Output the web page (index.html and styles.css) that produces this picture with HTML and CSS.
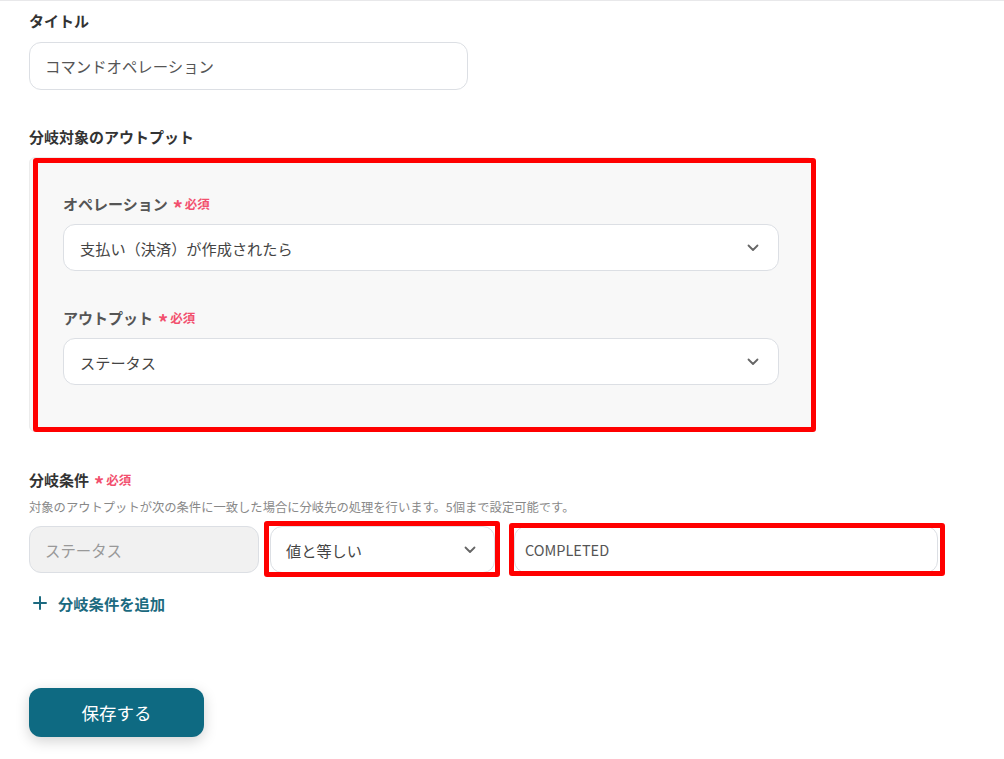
FILE: index.html
```html
<!DOCTYPE html>
<html lang="ja">
<head>
<meta charset="utf-8">
<link rel="stylesheet" href="styles.css">
</head>
<body>
<div class="page">
  <div class="label">タイトル</div>
  <div class="input title-input">コマンドオペレーション</div>

  <div class="label section-label">分岐対象のアウトプット</div>
  <div class="panel">
    <div class="label sub">オペレーション<span class="req"><span class="ast">*</span>必須</span></div>
    <div class="select">
      <span>支払い（決済）が作成されたら</span>
      <svg class="chev" width="12" height="8" viewBox="0 0 12 8"><path d="M1.5 1.5 L6 6 L10.5 1.5" fill="none" stroke="#666" stroke-width="1.8" stroke-linecap="round" stroke-linejoin="round"/></svg>
    </div>
    <div class="label sub second">アウトプット<span class="req"><span class="ast">*</span>必須</span></div>
    <div class="select">
      <span>ステータス</span>
      <svg class="chev" width="12" height="8" viewBox="0 0 12 8"><path d="M1.5 1.5 L6 6 L10.5 1.5" fill="none" stroke="#666" stroke-width="1.8" stroke-linecap="round" stroke-linejoin="round"/></svg>
    </div>
    <div class="annot annot-panel"></div>
  </div>

  <div class="label cond-label">分岐条件<span class="req"><span class="ast">*</span>必須</span></div>
  <div class="desc">対象のアウトプットが次の条件に一致した場合に分岐先の処理を行います。5個まで設定可能です。</div>
  <div class="cond-row">
    <div class="input disabled">ステータス</div>
    <div class="select small">
      <span>値と等しい</span>
      <svg class="chev" width="12" height="8" viewBox="0 0 12 8"><path d="M1.5 1.5 L6 6 L10.5 1.5" fill="none" stroke="#666" stroke-width="1.8" stroke-linecap="round" stroke-linejoin="round"/></svg>
      <div class="annot annot-select"></div>
    </div>
    <div class="input value">COMPLETED
      <div class="annot annot-value"></div>
    </div>
  </div>
  <div class="add">
    <svg width="14" height="14" viewBox="0 0 14 14"><path d="M7 1 V13 M1 7 H13" stroke="#1c6a80" stroke-width="2" stroke-linecap="round"/></svg>
    <span>分岐条件を追加</span>
  </div>

  <button class="save">保存する</button>
</div>
</body>
</html>
```

FILE: styles.css
```css
* { box-sizing: border-box; }
html, body { margin: 0; padding: 0; background: #fff; }
body {
  font-family: "Noto Sans CJK JP", "Noto Sans", sans-serif;
  color: #333;
  border-top: 1px solid #e8e8ea;
}
.page {
  padding: 10px 0 0 29px;
  width: 1004px;
  height: 758px;
}
.label {
  font-size: 15px;
  font-weight: 700;
  line-height: 20px;
  color: #333;
  display: flex;
  align-items: center;
}
.input {
  height: 48px;
  border: 1px solid #dcdfe4;
  border-radius: 12px;
  background: #fff;
  display: flex;
  align-items: center;
  padding: 0 15px;
  font-size: 15.4px;
  color: #555;
}
.title-input {
  width: 439px;
  margin-top: 11px;
}
.section-label { margin-top: 37px; }
.panel {
  position: relative;
  margin-top: 10px;
  width: 784px;
  background: #f8f8f8;
  border: 1px solid #ececec;
  border-radius: 6px;
  padding: 36px 33px 46px 33px;
}
.sub { color: #555; }
.second { margin-top: 37px; }
.req {
  color: #f2506e;
  font-size: 12.5px;
  font-weight: 700;
  margin-left: 5px;
  display: inline-flex;
  align-items: center;
}
.ast {
  font-size: 20px;
  margin-right: 2px;
  position: relative;
  top: 4px;
}
.select {
  position: relative;
  margin-top: 10px;
  height: 47px;
  border: 1px solid #dcdfe4;
  border-radius: 12px;
  background: #fff;
  display: flex;
  align-items: center;
  justify-content: space-between;
  padding: 0 19px 0 16px;
  font-size: 15.2px;
  color: #444;
}
.annot {
  position: absolute;
  border: 5px solid #ff0000;
  border-radius: 3px;
  pointer-events: none;
}
.annot-panel { left: 3px; top: 0px; right: -4px; bottom: -1px; }
.cond-label { margin-top: 38px; }
.desc {
  margin-top: 9px;
  font-size: 12.3px;
  line-height: 17px;
  color: #888;
}
.cond-row {
  margin-top: 10px;
  display: flex;
  align-items: center;
  gap: 11px;
}
.disabled {
  width: 230px;
  height: 47px;
  background: #f1f1f1;
  color: #999;
}
.select.small {
  margin-top: 0;
  width: 225px;
  height: 47px;
  padding-left: 15px;
  padding-right: 18px;
}
.annot-select { left: -7px; top: -6px; right: -6px; bottom: -5px; }
.input.value {
  position: relative;
  margin-left: 8px;
  width: 424px;
  height: 47px;
  font-size: 14.5px;
  color: #555;
  padding-left: 10px;
}
.annot-value { left: -6px; top: -4px; right: -8px; bottom: -4px; }
.add {
  margin-top: 20px;
  margin-left: 4px;
  display: flex;
  align-items: center;
  gap: 11px;
  color: #1c6a80;
  font-size: 15.3px;
  font-weight: 700;
  line-height: 20px;
}
.save {
  display: block;
  margin-top: 75px;
  width: 175px;
  height: 49px;
  border: none;
  border-radius: 12px;
  background: #0e6a82;
  color: #fff;
  font-family: inherit;
  font-size: 17.5px;
  box-shadow: 0 4px 14px rgba(0, 0, 0, 0.18);
}
```
